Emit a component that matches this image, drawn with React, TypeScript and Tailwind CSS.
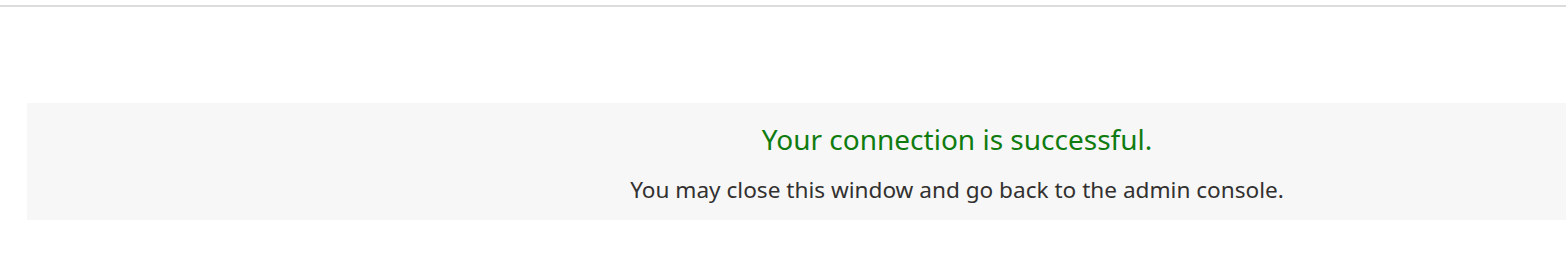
import React from "react";

export default function App() {
  return (
    <div className="w-[1566px] h-[272px] overflow-hidden bg-white" style={{ fontFamily: '"Noto Sans", "Open Sans", sans-serif' }}>
      <div className="h-[5px]" />
      <div className="h-[2px] bg-[#dcdcdc]" />
      <div className="h-[96px]" />
      <div className="ml-[27px] w-[1860px] h-[117px] bg-[#f7f7f7] flex flex-col items-center pt-[18px]">
        <div className="text-[28px] leading-[36px] text-[#107c10]">Your connection is successful.</div>
        <div className="mt-[18px] text-[22.6px] leading-[30px] text-[#323130]">You may close this window and go back to the admin console.</div>
      </div>
    </div>
  );
}
